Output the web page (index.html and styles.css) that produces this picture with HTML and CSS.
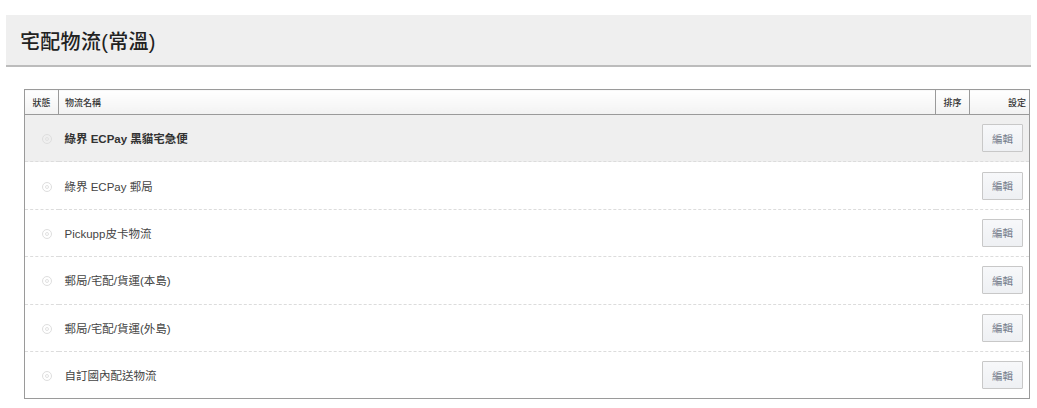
FILE: index.html
```html
<!DOCTYPE html>
<html lang="zh-Hant">
<head>
<meta charset="utf-8">
<title>宅配物流(常溫)</title>
<link rel="stylesheet" href="styles.css">
</head>
<body>
<div class="page">
  <div class="page-head"><h1 class="page-title">宅配物流(常溫)</h1></div>
  <table class="ship-table">
    <colgroup>
      <col class="c-status">
      <col class="c-name">
      <col class="c-sort">
      <col class="c-set">
    </colgroup>
    <thead>
      <tr>
        <th class="col-status">狀態</th>
        <th class="col-name">物流名稱</th>
        <th class="col-sort">排序</th>
        <th class="col-set">設定</th>
      </tr>
    </thead>
    <tbody>
      <tr class="is-hover">
        <td class="col-status"><span class="radio"></span></td>
        <td class="col-name strong">綠界 ECPay 黑貓宅急便</td>
        <td class="col-sort"></td>
        <td class="col-set"><button class="edit-btn">編輯</button></td>
      </tr>
      <tr>
        <td class="col-status"><span class="radio"></span></td>
        <td class="col-name">綠界 ECPay 郵局</td>
        <td class="col-sort"></td>
        <td class="col-set"><button class="edit-btn">編輯</button></td>
      </tr>
      <tr>
        <td class="col-status"><span class="radio"></span></td>
        <td class="col-name">Pickupp皮卡物流</td>
        <td class="col-sort"></td>
        <td class="col-set"><button class="edit-btn">編輯</button></td>
      </tr>
      <tr>
        <td class="col-status"><span class="radio"></span></td>
        <td class="col-name">郵局/宅配/貨運(本島)</td>
        <td class="col-sort"></td>
        <td class="col-set"><button class="edit-btn">編輯</button></td>
      </tr>
      <tr>
        <td class="col-status"><span class="radio"></span></td>
        <td class="col-name">郵局/宅配/貨運(外島)</td>
        <td class="col-sort"></td>
        <td class="col-set"><button class="edit-btn">編輯</button></td>
      </tr>
      <tr>
        <td class="col-status"><span class="radio"></span></td>
        <td class="col-name">自訂國內配送物流</td>
        <td class="col-sort"></td>
        <td class="col-set"><button class="edit-btn">編輯</button></td>
      </tr>
    </tbody>
  </table>
</div>
</body>
</html>
```

FILE: styles.css
```css
html, body {
  margin: 0;
  padding: 0;
  background: #fff;
}
body {
  font-family: "Liberation Sans", "Noto Sans CJK TC", sans-serif;
  color: #333;
}
.page {
  padding: 15px 6px 0 6px;
}
.page-head {
  background: #efefef;
  border-bottom: 2px solid #bcbcbc;
  height: 50px;
  display: flex;
  align-items: center;
  padding-left: 14px;
}
.page-title {
  margin: 0;
  font-size: 20px;
  font-weight: 500;
  color: #222;
  letter-spacing: 0.3px;
}
.ship-table {
  margin: 22px 0 0 18px;
  width: 1006px;
  border-collapse: collapse;
  border: 1px solid #9a9a9a;
  table-layout: fixed;
}
.c-status { width: 34px; }
.c-sort { width: 34px; }
.c-set { width: 60px; }
.ship-table th {
  height: 24px;
  padding: 0 6px;
  font-size: 9px;
  font-weight: 500;
  color: #333;
  text-align: left;
  background: linear-gradient(#ffffff, #f2f2f2);
  border-bottom: 1px solid #9a9a9a;
  border-left: 1px solid #9a9a9a;
}
.ship-table th.col-status { border-left: none; text-align: center; padding: 0; }
.ship-table th.col-sort { text-align: center; padding: 0; }
.ship-table th.col-set { text-align: right; padding: 0 3px 0 0; }
.ship-table td {
  height: 46.4px;
  padding: 0;
  font-size: 11.5px;
  color: #444;
  border-bottom: 1px dashed #dcdcdc;
}
.ship-table tbody tr:last-child td { border-bottom: none; }
.ship-table tr.is-hover td { background: #efefef; }
.ship-table td.col-name { padding-left: 6px; }
.ship-table td.strong { font-weight: 700; color: #333; }
.ship-table td.col-status { text-align: center; }
.ship-table td.col-set { text-align: right; padding-right: 6px; }
.radio {
  display: inline-block;
  width: 8px;
  height: 8px;
  border: 1px solid #dedede;
  border-radius: 50%;
  position: relative;
  vertical-align: middle;
  margin-left: 10px;
}
.radio::after {
  content: "";
  position: absolute;
  left: 2px;
  top: 2px;
  width: 2px;
  height: 2px;
  border: 1px solid #e2e2e2;
  border-radius: 50%;
}
.edit-btn {
  width: 41px;
  height: 28px;
  padding: 0;
  font-family: "Liberation Sans", "Noto Sans CJK TC", sans-serif;
  font-size: 10.5px;
  color: #737b8a;
  background: linear-gradient(#f7f8fa, #eef0f3);
  border: 1px solid #c8c8c8;
  border-radius: 1px;
  vertical-align: middle;
}
```
